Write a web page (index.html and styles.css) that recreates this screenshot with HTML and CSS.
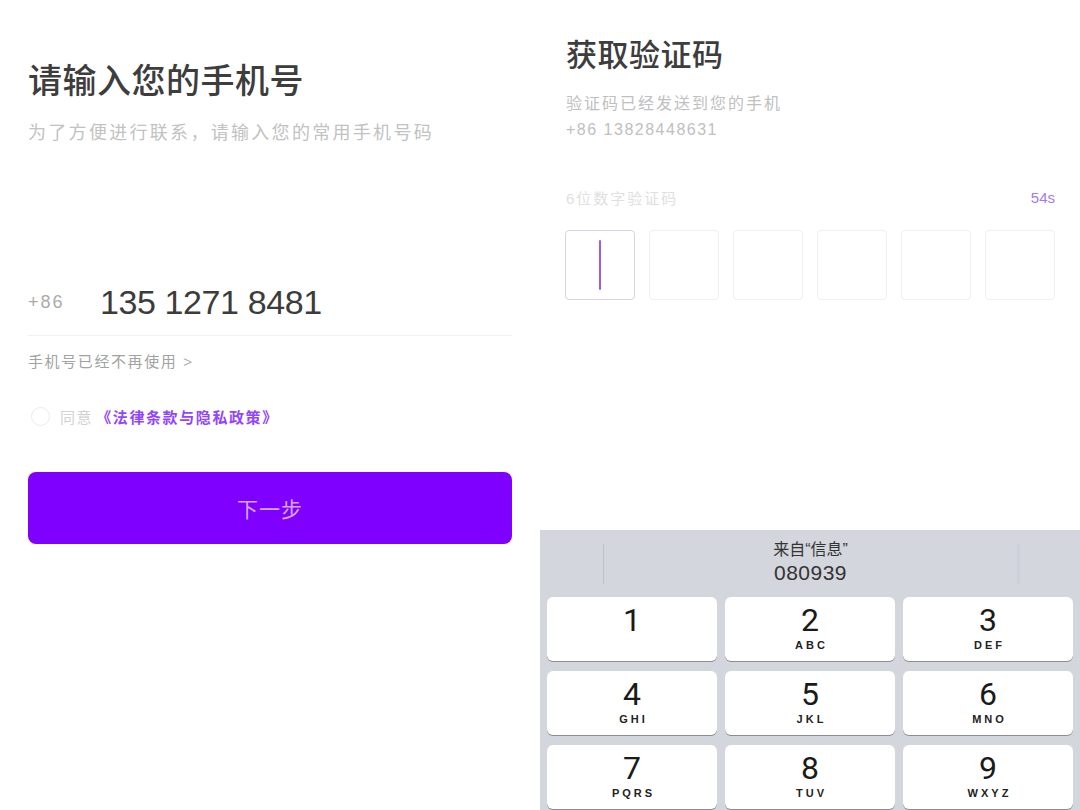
FILE: index.html
```html
<!DOCTYPE html>
<html lang="zh-CN">
<head>
<meta charset="utf-8">
<title>登录</title>
<link rel="stylesheet" href="styles.css">
</head>
<body>
<div class="screen">
  <section class="panel left">
    <h1 class="title">请输入您的手机号</h1>
    <p class="sub">为了方便进行联系，请输入您的常用手机号码</p>
    <div class="phone-row">
      <span class="cc">+86</span>
      <span class="phone">135 1271 8481</span>
    </div>
    <div class="nouse">手机号已经不再使用 <span class="chev">&gt;</span></div>
    <div class="agree">
      <span class="check"></span>
      <span class="agree-t">同意</span>
      <span class="link">《法律条款与隐私政策》</span>
    </div>
    <button class="next">下一步</button>
  </section>
  <section class="panel right">
    <h1 class="title title-r">获取验证码</h1>
    <p class="sent">验证码已经发送到您的手机<br><span class="num">+86 13828448631</span></p>
    <div class="code-head">
      <span class="hint">6位数字验证码</span>
      <span class="timer">54s</span>
    </div>
    <div class="boxes">
      <div class="box active"><span class="cursor"></span></div>
      <div class="box"></div>
      <div class="box"></div>
      <div class="box"></div>
      <div class="box"></div>
      <div class="box"></div>
    </div>
    <div class="keyboard">
      <div class="suggest">
        <span class="sep"></span>
        <div class="sugg-text">
          <div class="from">来自“信息”</div>
          <div class="code">080939</div>
        </div>
        <span class="sep sep-r"></span>
      </div>
      <div class="keys">
        <div class="key"><span class="d">1</span><span class="l"></span></div>
        <div class="key"><span class="d">2</span><span class="l">ABC</span></div>
        <div class="key"><span class="d">3</span><span class="l">DEF</span></div>
        <div class="key"><span class="d">4</span><span class="l">GHI</span></div>
        <div class="key"><span class="d">5</span><span class="l">JKL</span></div>
        <div class="key"><span class="d">6</span><span class="l">MNO</span></div>
        <div class="key"><span class="d">7</span><span class="l">PQRS</span></div>
        <div class="key"><span class="d">8</span><span class="l">TUV</span></div>
        <div class="key"><span class="d">9</span><span class="l">WXYZ</span></div>
      </div>
    </div>
  </section>
</div>
</body>
</html>
```
FILE: styles.css
```css
* { box-sizing: border-box; }
html, body { margin: 0; padding: 0; background: #fff; }
body {
  font-family: "Liberation Sans", "Noto Sans CJK SC", sans-serif;
  color: #333;
}
.screen {
  display: flex;
  width: 1080px;
  height: 810px;
  overflow: hidden;
}
.panel {
  width: 540px;
  height: 810px;
  display: flex;
  flex-direction: column;
}
.left { padding: 61px 28px 0 28px; }
.right { padding: 36px 0 0 0; }

.title {
  margin: 0;
  font-size: 34px;
  line-height: 40px;
  font-weight: 500;
  color: #3d3d3d;
  letter-spacing: 0.5px;
}
.sub {
  margin: 20px 0 0 0;
  font-size: 18px;
  line-height: 24px;
  color: #c2c2c2;
  letter-spacing: 2.3px;
}
.phone-row {
  margin-top: 137px;
  height: 54px;
  padding-bottom: 13px;
  border-bottom: 1px solid #f1f1f1;
  display: flex;
  align-items: center;
}
.cc {
  width: 72px;
  font-size: 18px;
  color: #ababab;
  letter-spacing: 2px;
}
.phone {
  font-size: 34px;
  letter-spacing: -0.4px;
  color: #3c3c3c;
}
.nouse {
  margin-top: 15px;
  font-size: 15px;
  line-height: 22px;
  color: #a2a2a2;
  letter-spacing: 1.6px;
}
.chev { color: #b0b0b0; }
.agree {
  margin-top: 32px;
  display: flex;
  align-items: center;
  height: 22px;
  font-size: 15px;
  letter-spacing: 1.6px;
}
.check {
  width: 19px;
  height: 19px;
  border: 1.5px solid #ececec;
  border-radius: 50%;
  margin: 0 10px 0 3px;
}
.agree-t { color: #d2d2d2; margin-right: 3px; }
.link { color: #9145ff; font-weight: 600; }
.next {
  margin-top: 45px;
  width: 484px;
  height: 72px;
  border: none;
  border-radius: 8px;
  background: #8000ff;
  color: rgba(255, 255, 255, 0.68);
  font-family: "Liberation Sans", "Noto Sans CJK SC", sans-serif;
  font-size: 21px;
  letter-spacing: 1px;
  padding: 0;
}

.title-r {
  font-size: 31px;
  padding: 0 26px;
}
.sent {
  margin: 15px 0 0 0;
  padding: 0 26px;
  font-size: 16px;
  line-height: 26px;
  color: #c0c0c0;
  letter-spacing: 2px;
}
.sent .num { letter-spacing: 1.5px; }
.code-head {
  margin-top: 43px;
  padding: 0 25px 0 26px;
  display: flex;
  justify-content: space-between;
  align-items: center;
  height: 22px;
}
.hint { font-size: 15px; color: #e0e0e0; letter-spacing: 2px; }
.timer { font-size: 15px; color: #a27af2; }
.boxes {
  margin-top: 22px;
  padding: 0 25px;
  display: flex;
  gap: 14px;
}
.box {
  width: 70px;
  height: 70px;
  border: 1.5px solid #f0f0f0;
  border-radius: 4px;
  display: flex;
  align-items: center;
  justify-content: center;
}
.box.active { border-color: #d9d2e6; }
.cursor {
  width: 2.5px;
  height: 50px;
  background: #9b5cf0;
  border-radius: 1px;
}

.keyboard {
  margin-top: auto;
  height: 280px;
  background: #d3d6dc;
  overflow: hidden;
}
.suggest {
  height: 67px;
  display: flex;
  align-items: center;
}
.sep {
  width: 1px;
  height: 40px;
  background: #bfc2c8;
  margin-left: 63px;
}
.sep-r {
  width: 3px;
  margin-left: 0;
  margin-right: 60px;
  background: #cdd0d9;
}
.sugg-text {
  flex: 1;
  text-align: center;
  color: #333;
  padding-bottom: 4px;
}
.from { font-size: 16px; line-height: 22px; }
.code { font-size: 21px; line-height: 24px; letter-spacing: 0.5px; }
.keys {
  display: grid;
  grid-template-columns: repeat(3, 170px);
  grid-auto-rows: 64px;
  column-gap: 8px;
  row-gap: 10px;
  padding: 0 7px;
}
.key {
  background: #fff;
  border-radius: 6px;
  box-shadow: 0 1px 0 #8c8d90;
  display: flex;
  flex-direction: column;
  align-items: center;
  padding-top: 6px;
}
.d {
  font-family: "Roboto", "Liberation Sans", sans-serif;
  font-size: 32px;
  line-height: 34px;
  color: #1a1a1a;
}
.l {
  font-family: "Liberation Sans", sans-serif;
  font-size: 11px;
  font-weight: 700;
  line-height: 16px;
  letter-spacing: 3px;
  margin-right: -3px;
  color: #222;
}
```
